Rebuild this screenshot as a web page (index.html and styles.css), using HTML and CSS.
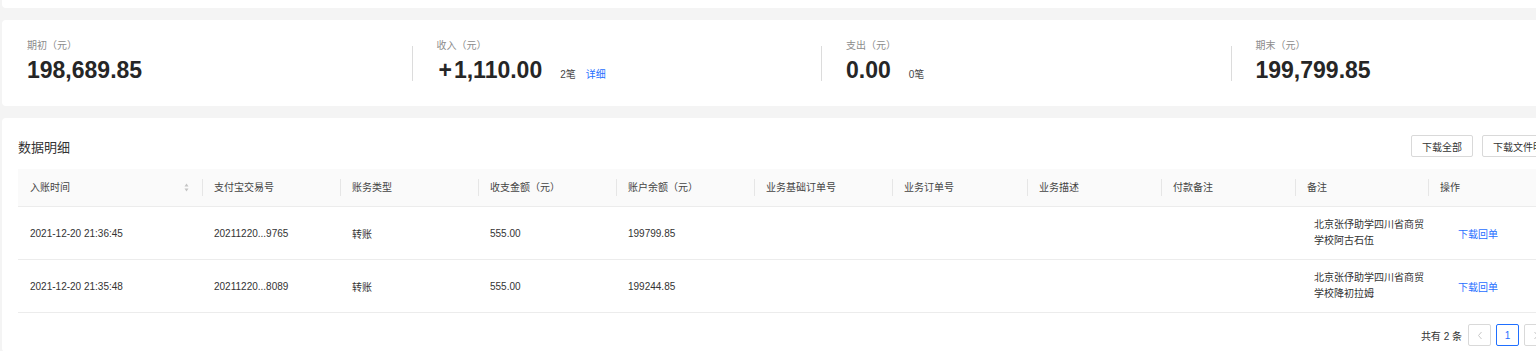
FILE: index.html
```html
<!DOCTYPE html>
<html lang="zh-CN">
<head>
<meta charset="utf-8">
<title>账单明细</title>
<link rel="stylesheet" href="styles.css">
</head>
<body>
<div class="page">
  <div class="top-card"></div>

  <div class="stats-card">
    <div class="stat stat-first">
      <div class="stat-body">
        <div class="stat-label">期初（元）</div>
        <div class="stat-value">198,689.85</div>
      </div>
    </div>
    <div class="stat">
      <div class="sep"></div>
      <div class="stat-body">
        <div class="stat-label">收入（元）</div>
        <div class="stat-value"><span class="plus">+</span>1,110.00<span class="count">2笔</span><a class="link detail">详细</a></div>
      </div>
    </div>
    <div class="stat">
      <div class="sep"></div>
      <div class="stat-body">
        <div class="stat-label">支出（元）</div>
        <div class="stat-value">0.00<span class="count">0笔</span></div>
      </div>
    </div>
    <div class="stat">
      <div class="sep"></div>
      <div class="stat-body">
        <div class="stat-label">期末（元）</div>
        <div class="stat-value">199,799.85</div>
      </div>
    </div>
  </div>

  <div class="table-card">
    <div class="card-head">
      <div class="card-title">数据明细</div>
      <div class="actions">
        <button class="btn">下载全部</button>
        <button class="btn">下载文件明细</button>
      </div>
    </div>

    <table class="grid">
      <colgroup>
        <col class="c1"><col class="c2"><col class="c2"><col class="c2"><col class="c2"><col class="c2">
        <col class="c7"><col class="c8"><col class="c8"><col class="c10"><col class="c11">
      </colgroup>
      <thead>
        <tr>
          <th><div class="th-in first"><span>入账时间</span>
            <svg class="sorter" width="5" height="9" viewBox="0 0 5 9"><path d="M2.5 0.5 L4.5 3.5 L0.5 3.5 Z" fill="#c4c4c4"/><path d="M2.5 8.5 L4.5 5.5 L0.5 5.5 Z" fill="#c4c4c4"/></svg>
          </div></th>
          <th><div class="th-in">支付宝交易号</div></th>
          <th><div class="th-in">账务类型</div></th>
          <th><div class="th-in">收支金额（元）</div></th>
          <th><div class="th-in">账户余额（元）</div></th>
          <th><div class="th-in">业务基础订单号</div></th>
          <th><div class="th-in">业务订单号</div></th>
          <th><div class="th-in">业务描述</div></th>
          <th><div class="th-in">付款备注</div></th>
          <th><div class="th-in">备注</div></th>
          <th><div class="th-in">操作</div></th>
        </tr>
      </thead>
      <tbody>
        <tr>
          <td>2021-12-20 21:36:45</td>
          <td>20211220...9765</td>
          <td>转账</td>
          <td>555.00</td>
          <td>199799.85</td>
          <td></td>
          <td></td>
          <td></td>
          <td></td>
          <td class="remark">北京张伃助学四川省商贸学校阿古石伍</td>
          <td class="op"><a class="link">下载回单</a></td>
        </tr>
        <tr>
          <td>2021-12-20 21:35:48</td>
          <td>20211220...8089</td>
          <td>转账</td>
          <td>555.00</td>
          <td>199244.85</td>
          <td></td>
          <td></td>
          <td></td>
          <td></td>
          <td class="remark">北京张伃助学四川省商贸学校降初拉姆</td>
          <td class="op"><a class="link">下载回单</a></td>
        </tr>
      </tbody>
    </table>

    <div class="pager">
      <span class="total">共有 2 条</span>
      <span class="pg-btn pg-arrow">
        <svg width="6" height="9" viewBox="0 0 6 9"><path d="M4.5 1 L1.5 4.5 L4.5 8" fill="none" stroke="#c8c8c8" stroke-width="1"/></svg>
      </span>
      <span class="pg-btn pg-active">1</span>
      <span class="pg-btn pg-arrow">
        <svg width="6" height="9" viewBox="0 0 6 9"><path d="M1.5 1 L4.5 4.5 L1.5 8" fill="none" stroke="#c8c8c8" stroke-width="1"/></svg>
      </span>
    </div>
  </div>
</div>
</body>
</html>
```

FILE: styles.css
```css
html, body {
  margin: 0;
  padding: 0;
}

body {
  background: #f4f4f4;
  overflow: hidden;
  font-family: "Liberation Sans", "Noto Sans CJK SC", sans-serif;
  color: #333;
}

.page {
  width: 1700px;
  padding-left: 2px;
}

.top-card {
  width: 1640px;
  height: 8px;
  background: #fff;
  border-radius: 0 0 4px 4px;
}

.stats-card {
  margin-top: 12px;
  width: 1660px;
  height: 86px;
  box-sizing: border-box;
  padding-top: 19px;
  background: #fff;
  border-radius: 4px;
  display: flex;
  align-items: flex-start;
}

.stat {
  flex: 0 0 409.5px;
  display: flex;
  align-items: flex-start;
}

.stat-first .stat-body {
  padding-left: 25px;
}

.sep {
  width: 1px;
  height: 35px;
  margin-top: 7px;
  background: #dcdcdc;
}

.stat-body {
  padding-left: 24px;
}

.stat-label {
  font-size: 10px;
  line-height: 14px;
  color: #8c8c8c;
}

.stat-value {
  margin-top: 3px;
  font-size: 23px;
  line-height: 28px;
  font-weight: bold;
  color: #262626;
  white-space: nowrap;
}

.plus {
  margin-left: 2px;
  margin-right: 2px;
}

.count {
  margin-left: 18px;
  font-size: 10px;
  font-weight: normal;
  color: #444;
}

.link {
  color: #1f6fff;
  cursor: pointer;
}

.detail {
  margin-left: 10px;
  font-size: 10px;
  font-weight: normal;
}

.table-card {
  margin-top: 12px;
  width: 1578px;
  box-sizing: border-box;
  padding: 17px 16px 6px 16px;
  background: #fff;
  border-radius: 4px;
}

.card-head {
  display: flex;
  justify-content: space-between;
  align-items: flex-start;
}

.card-title {
  margin-top: 4px;
  font-size: 13px;
  line-height: 18px;
  color: #333;
}

.actions {
  display: flex;
  gap: 9px;
}

.btn {
  height: 22px;
  box-sizing: border-box;
  padding: 0 10px;
  border: 1px solid #d9d9d9;
  border-radius: 2px;
  background: #fff;
  font-family: inherit;
  font-size: 10px;
  color: #333;
}

.grid {
  margin-top: 12px;
  width: 1546px;
  table-layout: fixed;
  border-collapse: collapse;
  font-size: 10px;
}

.c1 { width: 184px; }
.c2 { width: 138px; }
.c7 { width: 135px; }
.c8 { width: 134px; }
.c10 { width: 133px; }
.c11 { width: 136px; }

.grid th {
  background: #fafafa;
  padding: 10px 0;
  font-weight: normal;
  text-align: left;
  color: #444;
  border-bottom: 1px solid #ececec;
}

.th-in {
  border-left: 1px solid #e6e6e6;
  padding-left: 11px;
  line-height: 17px;
  white-space: nowrap;
}

.th-in.first {
  border-left-color: transparent;
  display: flex;
  justify-content: space-between;
  align-items: center;
  padding-right: 13px;
}

.sorter {
  display: block;
}

.grid td {
  height: 52px;
  padding: 0 0 0 12px;
  border-bottom: 1px solid #ececec;
  color: #333;
  vertical-align: middle;
  white-space: nowrap;
  overflow: hidden;
}

.grid td.remark {
  padding-left: 19px;
  padding-right: 0;
  white-space: normal;
  line-height: 16px;
}

.grid td.op {
  padding-left: 30px;
}

.pager {
  margin-top: 11px;
  margin-right: 17px;
  display: flex;
  justify-content: flex-end;
  align-items: center;
  gap: 5px;
  font-size: 10px;
}

.total {
  margin-right: 1px;
  color: #333;
}

.pg-btn {
  width: 23px;
  height: 22px;
  box-sizing: border-box;
  border: 1px solid #d9d9d9;
  border-radius: 2px;
  display: flex;
  align-items: center;
  justify-content: center;
  background: #fff;
}

.pg-active {
  border-color: #1f6fff;
  color: #1f6fff;
}
```
